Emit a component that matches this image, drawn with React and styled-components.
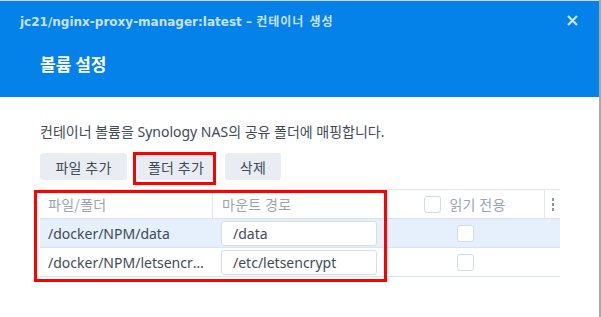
import React from "react"
import styled, { createGlobalStyle } from "styled-components"

const GlobalStyle = createGlobalStyle`
  html, body {
    margin: 0;
    padding: 0;
    background: #fff;
  }
  body {
    font-family: "Noto Sans", "Noto Sans CJK KR", sans-serif;
  }
`

const Page = styled.div`
  display: flex;
  width: 601px;
  height: 317px;
  overflow: hidden;
  background: #a9a9a9;
`

const Dialog = styled.div`
  position: relative;
  width: 599px;
  height: 317px;
  background: #fff;
  border-top: 1px solid #d3d3d3;
  box-sizing: border-box;
`

const Header = styled.header`
  background: #0581ea;
  height: 96px;
  display: flex;
  flex-direction: column;
`

const TitleBar = styled.div`
  display: flex;
  align-items: center;
  justify-content: space-between;
  height: 38px;
  padding: 0 21px 0 20px;
`

const Title = styled.div`
  font-family: "DejaVu Sans", "Noto Sans CJK KR", sans-serif;
  font-weight: bold;
  font-size: 12px;
  color: #c9e2fb;

  & > span {
    letter-spacing: 1px;
  }
`

const Close = styled.button`
  display: flex;
  border: 0;
  padding: 0;
  background: none;
`

const Heading = styled.h1`
  margin: 0;
  padding: 12px 0 0 40px;
  font-family: "Noto Sans CJK KR", sans-serif;
  font-size: 17px;
  font-weight: bold;
  color: #fff;
`

const Body = styled.div`
  padding: 26px 40px 0 40px;
`

const Desc = styled.p`
  margin: 0;
  font-size: 14px;
  line-height: 18px;
  color: #414b55;
`

const Toolbar = styled.div`
  display: flex;
  gap: 10px;
  margin-top: 12px;
`

const Button = styled.button`
  width: ${(p) => p.w}px;
  height: 27px;
  border: 0;
  border-radius: 3px;
  background: #e9edf3;
  font-family: "Noto Sans CJK KR", sans-serif;
  font-size: 14px;
  letter-spacing: 0.3px;
  color: #414b55;
  padding: 0;
`

const Table = styled.div`
  margin-top: 9px;
  width: 520px;
  border-top: 1px solid #e2e7ed;
`

const Row = styled.div`
  display: grid;
  grid-template-columns: 172px 174px 158px 16px;
  height: 29px;
  align-items: center;
  background: ${(p) => (p.selected ? "#e5f0fc" : "#fff")};
  border-bottom: 1px solid #dbe3ea;
  box-sizing: border-box;
`

const HeadCell = styled.div`
  height: 100%;
  display: flex;
  align-items: center;
  justify-content: ${(p) => (p.center ? "center" : "flex-start")};
  gap: 8px;
  padding-left: ${(p) => p.pad ?? 8}px;
  border-left: ${(p) => (p.divider ? "1px solid #e2e7ed" : "0")};
  font-family: "Noto Sans CJK KR", sans-serif;
  font-size: 14px;
  letter-spacing: 0.3px;
  color: #9ba5b0;
  box-sizing: border-box;
`

const Cell = styled.div`
  display: flex;
  align-items: center;
  justify-content: ${(p) => (p.center ? "center" : "flex-start")};
  padding-left: ${(p) => p.pad ?? 8}px;
  padding-right: ${(p) => p.padR ?? 0}px;
  font-size: 14px;
  color: #414b55;
  min-width: 0;
  box-sizing: border-box;
`

const Ellipsis = styled.span`
  white-space: nowrap;
  overflow: hidden;
  text-overflow: ellipsis;
`

const Input = styled.div`
  width: 156px;
  height: 25px;
  display: flex;
  align-items: center;
  padding-left: 11px;
  background: #fff;
  border: 1px solid #d6dde5;
  border-radius: 3px;
  box-sizing: border-box;
  font-size: 14px;
  color: #414b55;
`

const Check = styled.span`
  display: inline-block;
  width: 17px;
  height: 17px;
  background: #fff;
  border: 1px solid #d3dbe3;
  border-radius: 3px;
  box-sizing: border-box;
`

const Dots = styled.span`
  display: flex;
  flex-direction: column;
  gap: 2px;
  margin-left: 7px;

  & > i {
    width: 2px;
    height: 3px;
    background: #8e979f;
  }
`

const Mark = styled.div`
  position: absolute;
  left: ${(p) => p.x}px;
  top: ${(p) => p.y}px;
  width: ${(p) => p.w}px;
  height: ${(p) => p.h}px;
  border: 3px solid #ff0000;
  box-sizing: border-box;
  pointer-events: none;
`

const rows = [
  { path: "/docker/NPM/data", mount: "/data", selected: true },
  { path: "/docker/NPM/letsencrypt", mount: "/etc/letsencrypt" },
]

const App = () => (
  <Page>
    <GlobalStyle />
    <Dialog>
      <Header>
        <TitleBar>
          <Title>
            jc21/nginx-proxy-manager:latest – <span>컨테이너 생성</span>
          </Title>
          <Close aria-label="close">
            <svg width="11" height="11" viewBox="0 0 11 11">
              <path d="M1 1 L10 10 M10 1 L1 10" stroke="#cbe3fb" strokeWidth="2.2" />
            </svg>
          </Close>
        </TitleBar>
        <Heading>볼륨 설정</Heading>
      </Header>
      <Body>
        <Desc>컨테이너 볼륨을 Synology NAS의 공유 폴더에 매핑합니다.</Desc>
        <Toolbar>
          <Button w={87}>파일 추가</Button>
          <Button w={78}>폴더 추가</Button>
          <Button w={56}>삭제</Button>
        </Toolbar>
        <Table>
          <Row>
            <HeadCell>파일/폴더</HeadCell>
            <HeadCell divider pad={9}>마운트 경로</HeadCell>
            <HeadCell center pad={0}>
              <Check />
              읽기 전용
            </HeadCell>
            <HeadCell divider pad={0}>
              <Dots>
                <i />
                <i />
                <i />
              </Dots>
            </HeadCell>
          </Row>
          {rows.map((r) => (
            <Row key={r.path} selected={r.selected}>
              <Cell padR={6}>
                <Ellipsis>{r.path}</Ellipsis>
              </Cell>
              <Cell pad={9}>
                <Input>{r.mount}</Input>
              </Cell>
              <Cell center pad={0}>
                <Check />
              </Cell>
              <Cell />
            </Row>
          ))}
        </Table>
      </Body>
      <Mark x={133} y={151} w={83} h={33} />
      <Mark x={34} y={189} w={353} h={92} />
    </Dialog>
  </Page>
)

export default App
